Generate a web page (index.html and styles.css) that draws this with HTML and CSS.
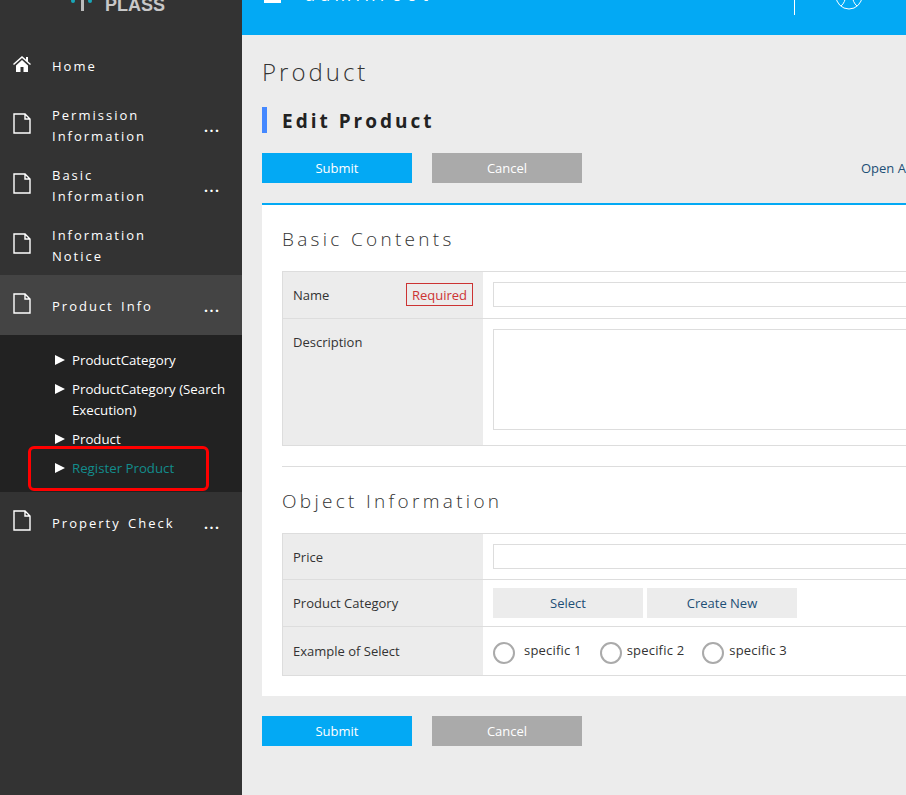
FILE: index.html
```html
<!DOCTYPE html>
<html lang="en">
<head>
<meta charset="UTF-8">
<meta name="viewport" content="width=device-width, initial-scale=1.0">
<title>Edit Product</title>
<link rel="stylesheet" href="styles.css">
</head>
<body>

<svg width="0" height="0" class="defs">
    <symbol id="doc" viewBox="0 0 18 21">
        <path d="M1 1H12L17 6V20H1Z M12 1V6H17" fill="none" stroke="#fff" stroke-width="1.4"/>
    </symbol>
    <symbol id="arrow" viewBox="0 0 10 10">
        <path d="M0 0L10 5L0 10Z" fill="#fff"/>
    </symbol>
</svg>

<aside class="sidebar">
    <div class="logo">
        <svg class="logo-mark" viewBox="0 0 22 14"><circle cx="2" cy="4" r="2" fill="#1aa6b7"/><circle cx="19" cy="4" r="2" fill="#1aa6b7"/><path d="M10 0H13V14H10Z" fill="#bbb"/></svg>
        <span>PLASS</span>
    </div>

    <ul class="menu">
        <li class="menu-item menu-home">
            <svg class="menu-icon" viewBox="0 0 18 16"><path d="M9 0L0 8L1 9L9 2L17 9L18 8L15 5.4V1H13V3.6Z M3 9.5V16H7.5V11H10.5V16H15V9.5L9 4Z" fill="#fff"/></svg>
            <span class="menu-label">Home</span>
        </li>
        <li class="menu-item">
            <svg class="menu-icon"><use href="#doc"/></svg>
            <span class="menu-label">Permission<br>Information</span>
            <span class="menu-more">...</span>
        </li>
        <li class="menu-item">
            <svg class="menu-icon"><use href="#doc"/></svg>
            <span class="menu-label">Basic<br>Information</span>
            <span class="menu-more">...</span>
        </li>
        <li class="menu-item">
            <svg class="menu-icon"><use href="#doc"/></svg>
            <span class="menu-label">Information<br>Notice</span>
        </li>
        <li class="menu-item menu-open">
            <svg class="menu-icon"><use href="#doc"/></svg>
            <span class="menu-label">Product Info</span>
            <span class="menu-more">...</span>
        </li>
        <li class="submenu">
            <div class="sub-item"><svg class="sub-arrow"><use href="#arrow"/></svg><span>ProductCategory</span></div>
            <div class="sub-item"><svg class="sub-arrow"><use href="#arrow"/></svg><span>ProductCategory (Search Execution)</span></div>
            <div class="sub-item"><svg class="sub-arrow"><use href="#arrow"/></svg><span>Product</span></div>
            <div class="sub-item sub-current"><svg class="sub-arrow"><use href="#arrow"/></svg><span>Register Product</span></div>
            <div class="callout"></div>
        </li>
        <li class="menu-item">
            <svg class="menu-icon"><use href="#doc"/></svg>
            <span class="menu-label">Property Check</span>
            <span class="menu-more">...</span>
        </li>
    </ul>
</aside>

<div class="main">
    <header class="topbar">
        <div class="topbar-left">
            <span class="burger"></span>
            <span class="user-name">adminroot</span>
        </div>
        <div class="topbar-right">
            <svg class="globe" viewBox="0 0 28 28"><circle cx="14" cy="14" r="13" fill="none" stroke="#fff"/><path d="M6 4C12 9 12 19 6 24M22 4C16 9 16 19 22 24" fill="none" stroke="#fff"/></svg>
        </div>
    </header>

    <main class="content">
        <h1 class="page-title">Product</h1>
        <h2 class="sub-title">Edit Product</h2>

        <div class="actions">
            <button class="btn btn-submit">Submit</button>
            <button class="btn btn-cancel">Cancel</button>
            <a class="open-all">Open All</a>
        </div>

        <section class="panel">
            <h3 class="section-title">Basic Contents</h3>
            <table class="form-table">
                <tr class="row-name">
                    <th><div class="th-flex">Name<span class="required">Required</span></div></th>
                    <td><input class="field" type="text"></td>
                </tr>
                <tr class="row-desc">
                    <th>Description</th>
                    <td><textarea class="field field-area"></textarea></td>
                </tr>
            </table>

            <hr class="divider">

            <h3 class="section-title">Object Information</h3>
            <table class="form-table">
                <tr class="row-price">
                    <th>Price</th>
                    <td><input class="field" type="text"></td>
                </tr>
                <tr class="row-cat">
                    <th>Product Category</th>
                    <td>
                        <div class="light-btns">
                            <button class="btn-light">Select</button>
                            <button class="btn-light">Create New</button>
                        </div>
                    </td>
                </tr>
                <tr class="row-radio">
                    <th>Example of Select</th>
                    <td>
                        <div class="radios">
                            <label class="radio radio-first"><span class="radio-dot"></span>specific 1</label>
                            <label class="radio"><span class="radio-dot"></span>specific 2</label>
                            <label class="radio"><span class="radio-dot"></span>specific 3</label>
                        </div>
                    </td>
                </tr>
            </table>
        </section>

        <div class="actions actions-bottom">
            <button class="btn btn-submit">Submit</button>
            <button class="btn btn-cancel">Cancel</button>
        </div>
    </main>
</div>

</body>
</html>
```
FILE: styles.css
```css
html, body {
    height: 100%;
    margin: 0;
    overflow: hidden;
}
body {
    display: flex;
    width: 906px;
    height: 795px;
    background-color: #ececec;
    color: #333;
    font-family: "Open Sans", "Noto Sans", sans-serif;
    font-size: 13px;
}
.defs {
    position: absolute;
}

/* sidebar */
.sidebar {
    flex: none;
    width: 242px;
    background-color: #333;
    color: #fff;
}
.logo {
    display: flex;
    align-items: flex-end;
    box-sizing: border-box;
    height: 49px;
    margin-top: -13px;
    padding: 0 0 21px 71px;
    font-family: "Liberation Sans", sans-serif;
    font-size: 18px;
    font-weight: bold;
    line-height: 20px;
    color: #c8c8c8;
}
.logo-mark {
    width: 22px;
    height: 14px;
    margin-right: 12px;
    margin-bottom: 4px;
}
.menu {
    list-style: none;
    margin: 0;
    padding: 0;
}
.menu-item {
    display: flex;
    align-items: center;
    position: relative;
    height: 60px;
    padding-left: 13px;
}
.menu-home {
    height: 59px;
}
.menu-icon {
    flex: none;
    width: 18px;
    height: 21px;
    margin-right: 21px;
    margin-top: -4px;
}
.menu-home .menu-icon {
    height: 16px;
}
.menu-label {
    padding-top: 2px;
    font-size: 13px;
    letter-spacing: 2px;
    word-spacing: 2px;
    line-height: 21px;
}
.menu-more {
    position: absolute;
    left: 204px;
    top: 22px;
    font-size: 14px;
    font-weight: bold;
    letter-spacing: 1.5px;
    line-height: 20px;
}
.menu-open {
    background-color: #444;
}
.submenu {
    position: relative;
    background-color: #222;
    padding: 15px 0 5px 55px;
}
.sub-item {
    display: flex;
    font-size: 13.25px;
    line-height: 21px;
    margin-bottom: 8px;
}
.sub-item:last-of-type {
    margin-bottom: 0;
}
.sub-arrow {
    flex: none;
    width: 10px;
    height: 10px;
    margin: 5px 7px 0 0;
}
.sub-current {
    color: #128c8c;
}
.callout {
    position: absolute;
    left: 28px;
    top: 111px;
    width: 175px;
    height: 39px;
    border: 3px solid #f00;
    border-radius: 6px;
}

/* top bar */
.main {
    flex: 1;
    min-width: 0;
    overflow: hidden;
}
.topbar {
    display: flex;
    justify-content: space-between;
    height: 35px;
    overflow: hidden;
    background-color: #03a9f4;
    color: #fff;
}
.topbar-left {
    display: flex;
    align-items: flex-end;
    height: 3px;
    padding-left: 22px;
}
.burger {
    width: 17px;
    height: 3px;
    background-color: #fff;
}
.user-name {
    margin-left: 24px;
    font-size: 18px;
    letter-spacing: 4.3px;
    line-height: 18px;
}
.topbar-right {
    display: flex;
    align-items: flex-start;
    width: 111px;
    height: 15px;
    border-left: 1px solid #fff;
}
.globe {
    width: 28px;
    height: 28px;
    margin: -18px 0 0 40px;
}

/* content */
.content {
    padding: 0 0 0 20px;
}
.page-title {
    margin: 21px 0 0;
    font-size: 24px;
    font-weight: 300;
    letter-spacing: 3px;
    line-height: 32px;
}
.sub-title {
    margin: 19px 0 0;
    padding: 2px 0 0 15px;
    border-left: 5px solid #4488ff;
    color: #222;
    font-size: 19px;
    font-weight: 700;
    letter-spacing: 3px;
    line-height: 24px;
}
.actions {
    display: flex;
    align-items: center;
    margin-top: 20px;
}
.btn {
    flex: none;
    width: 150px;
    height: 30px;
    margin-right: 20px;
    padding: 0;
    border: none;
    color: #fff;
    font-family: inherit;
    font-size: 13px;
}
.btn-submit {
    background-color: #03a9f4;
}
.btn-cancel {
    background-color: #aaa;
}
.open-all {
    margin-left: 259px;
    color: #1d4f76;
    font-size: 13px;
    white-space: nowrap;
}
.panel {
    box-sizing: border-box;
    width: 700px;
    height: 493px;
    margin-top: 20px;
    padding: 0 20px;
    border-top: 2px solid #03a9f4;
    background-color: #fff;
}
.section-title {
    margin: 0;
    padding-top: 21px;
    font-size: 19px;
    font-weight: 300;
    letter-spacing: 3.3px;
    line-height: 27px;
}
.form-table {
    width: 100%;
    margin-top: 18px;
    border-collapse: collapse;
    table-layout: fixed;
}
.form-table th, .form-table td {
    border: 1px solid #ddd;
    border-right: none;
    padding: 0 10px;
    font-size: 13px;
    font-weight: normal;
    text-align: left;
}
.form-table th {
    width: 180px;
    background-color: #ececec;
}
.form-table td {
    border-left: none;
}
.th-flex {
    display: flex;
    justify-content: space-between;
    align-items: center;
}
.required {
    margin-top: -2px;
    padding: 1px 5px 0;
    border: 1px solid #c33;
    color: #c33;
    line-height: 20px;
}
.row-name {
    height: 47px;
}
.row-name td {
    padding-bottom: 2px;
}
.row-desc {
    height: 127px;
}
.row-desc th {
    vertical-align: top;
    padding-top: 14px;
}
.row-desc td {
    vertical-align: top;
    padding-top: 10px;
}
.row-price {
    height: 46px;
}
.row-cat {
    height: 47px;
}
.row-radio {
    height: 49px;
}
.row-radio td {
    padding-bottom: 2px;
}
.field {
    display: block;
    box-sizing: border-box;
    width: 100%;
    height: 25px;
    border: 1px solid #ddd;
    background-color: #fff;
}
.field-area {
    height: 101px;
    resize: none;
}
.divider {
    height: 1px;
    margin: 20px 0 0;
    border: none;
    background-color: #ddd;
}
.light-btns {
    display: flex;
    gap: 4px;
}
.btn-light {
    flex: none;
    width: 150px;
    height: 30px;
    padding: 0;
    border: none;
    background-color: #ececec;
    color: #1d4f76;
    font-family: inherit;
    font-size: 13px;
}
.radios {
    display: flex;
}
.radio {
    display: flex;
    align-items: center;
    margin-right: 18px;
    letter-spacing: 0.2px;
}
.radio-dot {
    box-sizing: border-box;
    width: 22px;
    height: 22px;
    margin-top: 6px;
    margin-right: 5px;
    border: 2px solid #aaa;
    border-radius: 50%;
}
.radio-first .radio-dot {
    margin-right: 9px;
}
.actions-bottom {
    margin-top: 20px;
}
```
